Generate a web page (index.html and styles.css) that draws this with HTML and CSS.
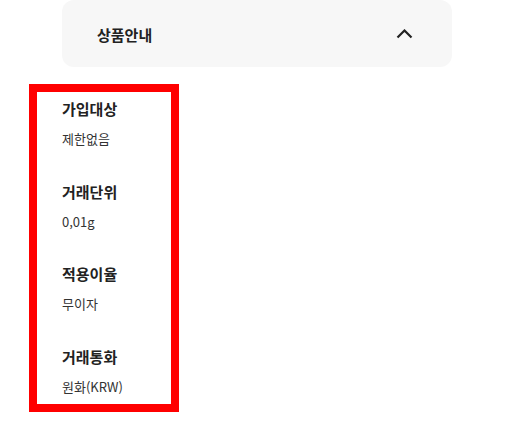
FILE: index.html
```html
<!DOCTYPE html>
<html lang="ko">
<head>
<meta charset="utf-8">
<link rel="stylesheet" href="styles.css">
</head>
<body>
<div class="card">
  <span class="card-title">상품안내</span>
  <svg class="chevron" width="17" height="10" viewBox="0 0 17 10"><polyline points="1.5,8.5 8.5,1.5 15.5,8.5" fill="none" stroke="#222" stroke-width="2.2"/></svg>
</div>
<div class="info">
  <div class="item"><div class="label">가입대상</div><div class="value">제한없음</div></div>
  <div class="item"><div class="label">거래단위</div><div class="value">0,01g</div></div>
  <div class="item"><div class="label">적용이율</div><div class="value">무이자</div></div>
  <div class="item"><div class="label">거래통화</div><div class="value">원화(KRW)</div></div>
</div>
</body>
</html>
```
FILE: styles.css
```css
html, body { margin: 0; padding: 0; background: #fff; }
body { font-family: "Noto Sans CJK KR", "Noto Sans", sans-serif; color: #222; }
.card {
  margin-left: 62px;
  width: 390px;
  height: 67px;
  box-sizing: border-box;
  padding: 2px 39px 0 35px;
  background: #f7f7f7;
  border-radius: 12px;
  display: flex;
  align-items: center;
  justify-content: space-between;
}
.card-title { font-size: 15px; font-weight: 700; color: #222; }
.chevron { display: block; margin-top: -2px; }
.info {
  margin: 17px 0 0 29px;
  width: 150px;
  box-sizing: border-box;
  border: 8px solid #ff0000;
  padding: 6px 0 7.5px 25px;
  display: flex;
  flex-direction: column;
  gap: 31.5px;
}
.item { display: flex; flex-direction: column; gap: 10px; }
.label { font-size: 15px; font-weight: 700; line-height: 21px; color: #222; }
.value { font-size: 13px; line-height: 20px; color: #333; }
```
